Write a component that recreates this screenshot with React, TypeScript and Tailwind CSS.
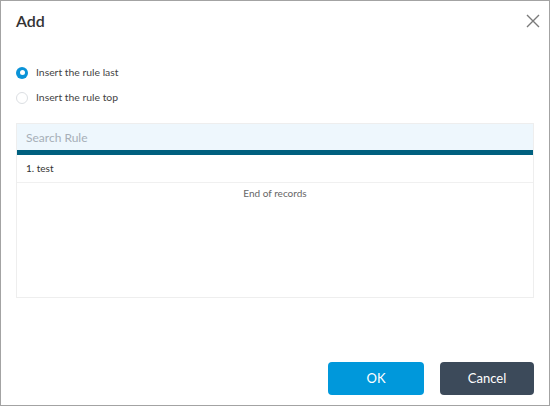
import { useState } from "react";

export default function App() {
  const [position, setPosition] = useState<"last" | "top">("last");

  const radio = (value: "last" | "top", label: string) => {
    const checked = position === value;
    return (
      <label
        className="flex h-[25px] cursor-pointer items-center gap-[8px] text-[10.4px] text-[#444]"
        onClick={() => setPosition(value)}
      >
        {checked ? (
          <span className="flex h-[12px] w-[12px] items-center justify-center rounded-full bg-[#0a93d8]">
            <span className="h-[5px] w-[5px] rounded-full bg-white" />
          </span>
        ) : (
          <span className="h-[12px] w-[12px] rounded-full border border-[#dcdfe3] bg-white" />
        )}
        {label}
      </label>
    );
  };

  return (
    <div
      className="flex h-[406px] w-[550px] flex-col border border-[#a3a3a3] bg-white"
      style={{ fontFamily: "Lato, 'Open Sans', sans-serif" }}
    >
      {/* header */}
      <div className="flex h-[39px] items-center justify-between pl-[15px] pr-[8px]">
        <h2 className="text-[16px] font-semibold text-[#333]">Add</h2>
        <button className="p-[1px]" aria-label="Close">
          <svg width="14" height="14" viewBox="0 0 14 14" fill="none">
            <path d="M1 1L13 13M13 1L1 13" stroke="#7a7a7a" strokeWidth="1.4" />
          </svg>
        </button>
      </div>

      {/* options */}
      <div className="mt-[20px] flex flex-col pl-[15px]">
        {radio("last", "Insert the rule last")}
        {radio("top", "Insert the rule top")}
      </div>

      {/* rule list */}
      <div className="mx-[15px] mt-[13px] flex h-[175px] flex-col border border-[#eeeeee]">
        <input
          placeholder="Search Rule"
          className="h-[26px] bg-[#eef7fd] px-[9px] text-[12px] text-[#444] outline-none placeholder:text-[#a7afb8]"
        />
        <div className="h-[5px] bg-[#00607f]" />
        <div className="flex h-[28px] items-center border-b border-[#f0f0f0] pl-[9px] text-[10px] text-[#333]">
          1. test
        </div>
        <div className="pt-[3px] text-center text-[10px] text-[#666]">End of records</div>
      </div>

      {/* footer */}
      <div className="mt-auto flex justify-end gap-[16px] pb-[10px] pr-[15px]">
        <button className="h-[33px] w-[96px] rounded-[4px] bg-[#0098db] text-[13px] text-white">
          OK
        </button>
        <button className="h-[33px] w-[94px] rounded-[4px] bg-[#3c4a5a] text-[13px] text-white">
          Cancel
        </button>
      </div>
    </div>
  );
}
